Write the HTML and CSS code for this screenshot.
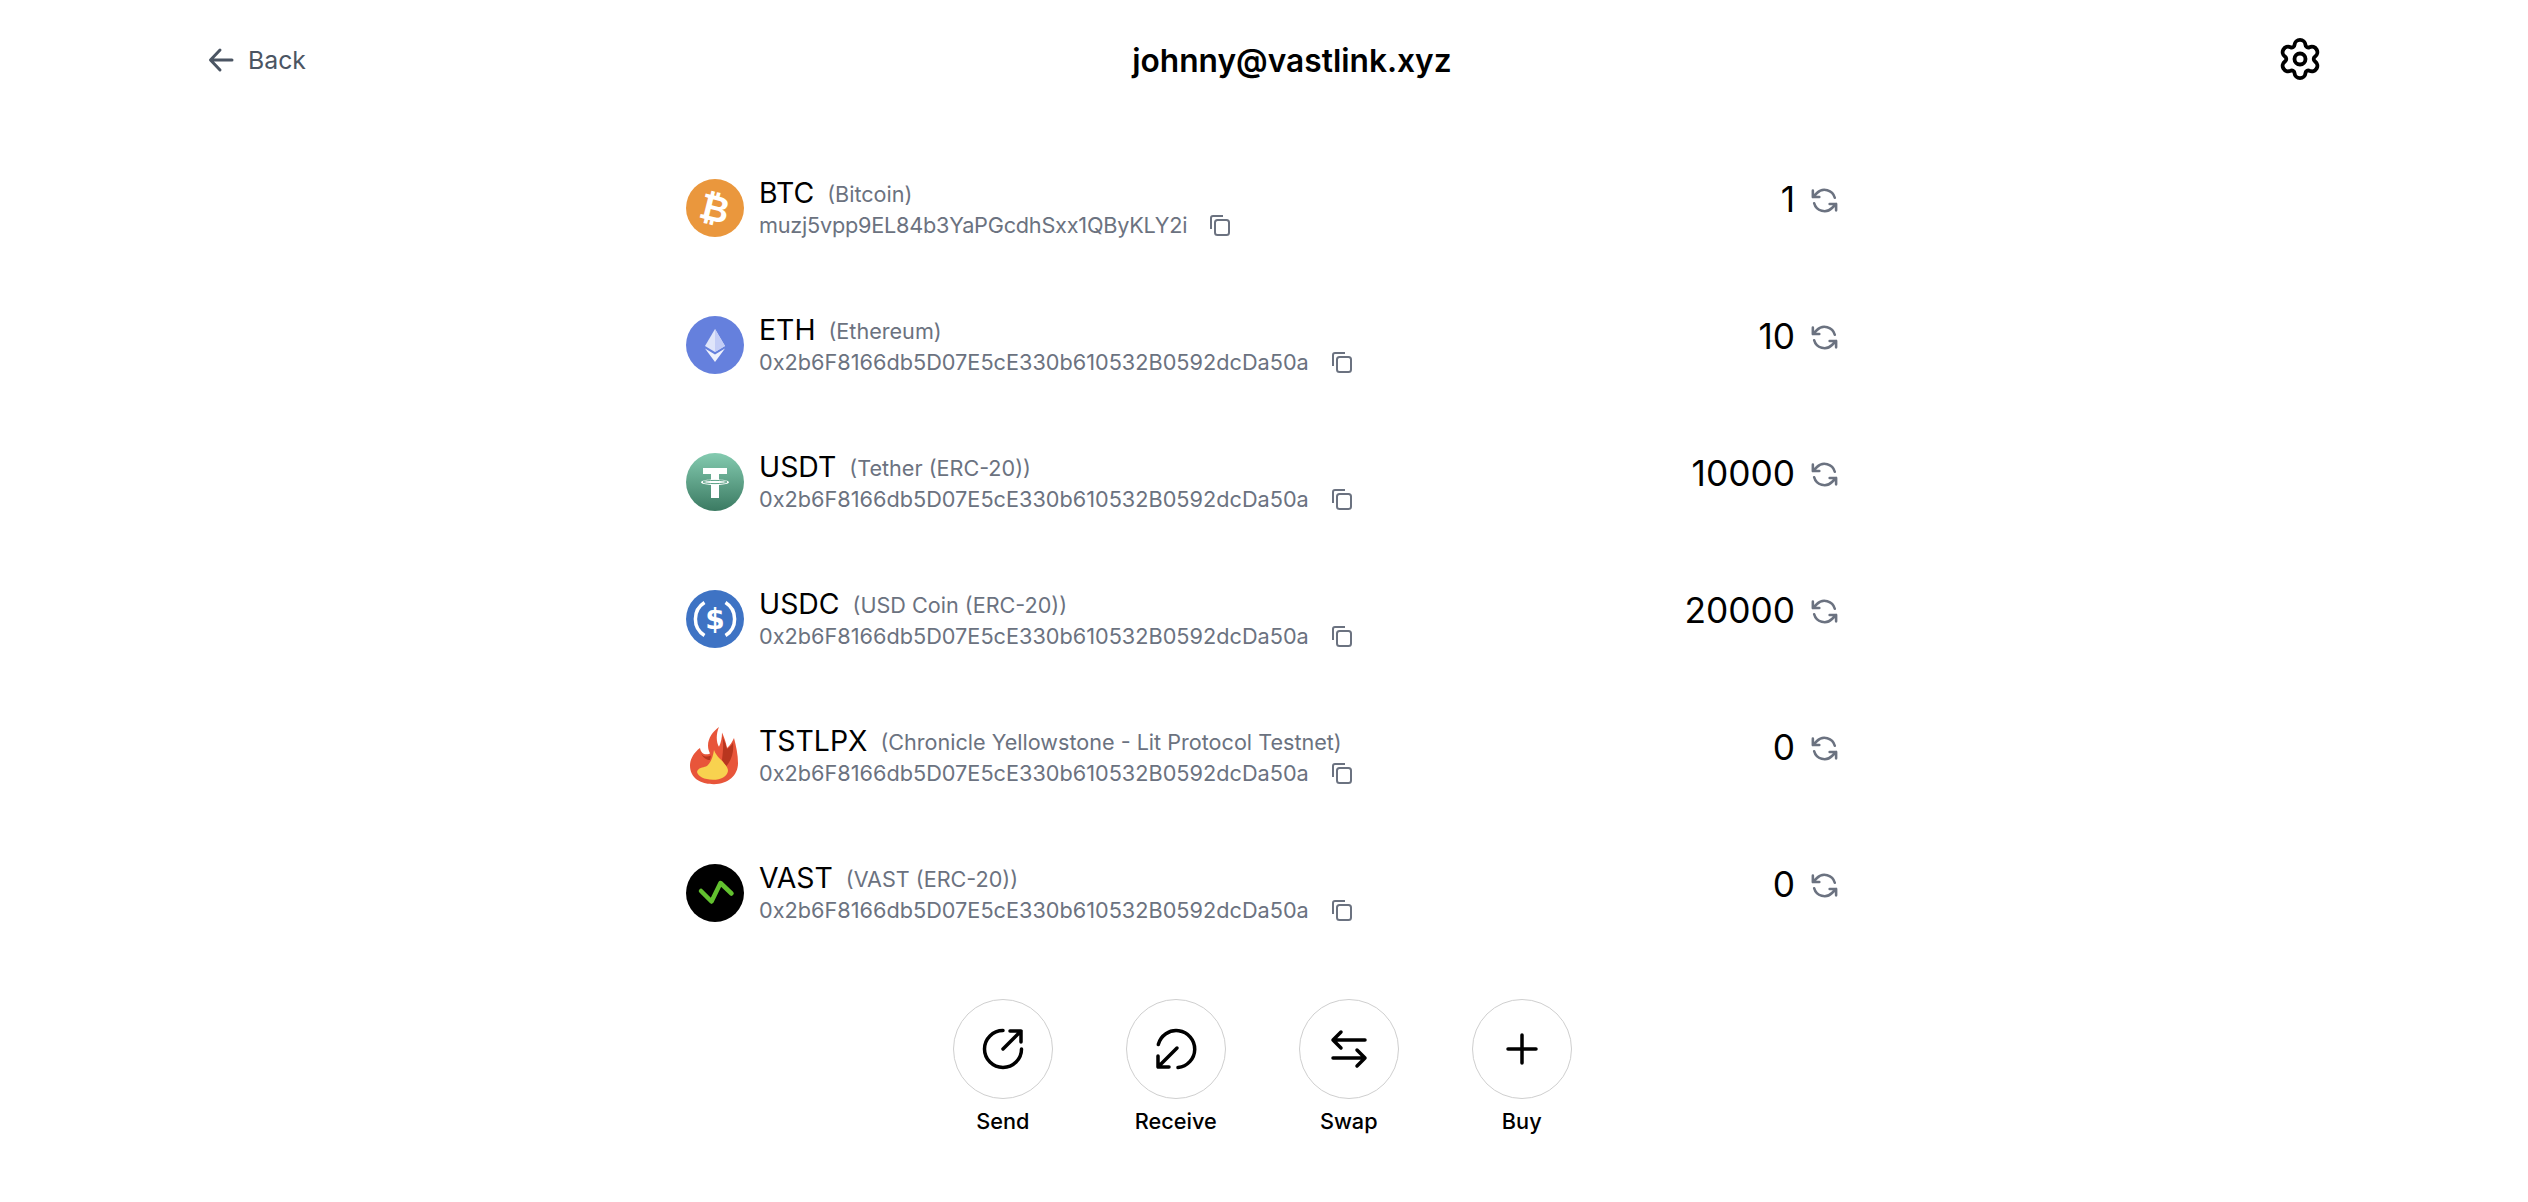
FILE: index.html
```html
<!doctype html>
<html lang="en">
<head>
  <meta charset="UTF-8">
  <title>Wallet</title>
  <link rel="stylesheet" href="styles.css">
</head>
<body>
<div class="page">
  <div class="top">
    <a class="back" href="#">
      <svg class="back-icon" viewBox="0 0 26 26"><path d="M24 13H3M12 3 2.500 13 12 23"/></svg>
      Back
    </a>
    <h1>johnny@vastlink.xyz</h1>
    <svg class="gear" viewBox="0 0 24 24">
      <path d="M9.010 4.310A3 3 0 0 1 14.990 4.310A1.500 1.500 0 0 0 17.165 5.565A3 3 0 0 1 20.155 10.745A1.500 1.500 0 0 0 20.155 13.255A3 3 0 0 1 17.165 18.435A1.500 1.500 0 0 0 14.990 19.690A3 3 0 0 1 9.010 19.690A1.500 1.500 0 0 0 6.835 18.435A3 3 0 0 1 3.845 13.255A1.500 1.500 0 0 0 3.845 10.745A3 3 0 0 1 6.835 5.565A1.500 1.500 0 0 0 9.010 4.310Z"/>
      <circle cx="12" cy="12" r="3"/>
    </svg>
  </div>

  <div class="list">
    <div class="row">
      <svg class="logo" viewBox="0 0 58 58">
        <circle cx="29" cy="29" r="29" fill="#ea973d"/>
        <text class="logo-text" x="29" y="42" transform="rotate(14 29 29)">₿</text>
      </svg>
      <div class="info">
        <div class="name">BTC <span class="full">(Bitcoin)</span></div>
        <div class="addr addr-btc">muzj5vpp9EL84b3YaPGcdhSxx1QByKLY2i
          <svg class="copy" viewBox="0 0 22 22"><rect x="6" y="6" width="14" height="15" rx="2.500"/><path d="M2 15V4a2 2 0 0 1 2-2h10"/></svg>
        </div>
      </div>
      <div class="amount">1</div>
      <svg class="refresh" viewBox="0 0 24 24"><path d="M7.977 9.348H2.985M20.985 19.644v-4.992m0 0h-4.992m4.993 0-3.181 3.183a8.250 8.250 0 0 1-13.803-3.700M19.969 9.865a8.250 8.250 0 0 0-13.803-3.700L2.985 9.347m0-4.991v4.990"/></svg>
    </div>

    <div class="row">
      <svg class="logo" viewBox="0 0 58 58">
        <circle cx="29" cy="29" r="29" fill="#6580dd"/>
        <path d="M29 13 19 30 29 36 39 30Z" fill="#dfe5fa"/>
        <path d="M29 13V36L39 30Z" fill="#c3cdf6"/>
        <path d="M19 32.500 29 46 39 32.500 29 38.500Z" fill="#eef1fc"/>
      </svg>
      <div class="info">
        <div class="name">ETH <span class="full">(Ethereum)</span></div>
        <div class="addr">0x2b6F8166db5D07E5cE330b610532B0592dcDa50a
          <svg class="copy" viewBox="0 0 22 22"><rect x="6" y="6" width="14" height="15" rx="2.500"/><path d="M2 15V4a2 2 0 0 1 2-2h10"/></svg>
        </div>
      </div>
      <div class="amount">10</div>
      <svg class="refresh" viewBox="0 0 24 24"><path d="M7.977 9.348H2.985M20.985 19.644v-4.992m0 0h-4.992m4.993 0-3.181 3.183a8.250 8.250 0 0 1-13.803-3.700M19.969 9.865a8.250 8.250 0 0 0-13.803-3.700L2.985 9.347m0-4.991v4.990"/></svg>
    </div>

    <div class="row">
      <svg class="logo" viewBox="0 0 58 58">
        <defs><linearGradient id="tether" x1="0" y1="0" x2="0" y2="1"><stop offset="0" stop-color="#84cbb0"/><stop offset="1" stop-color="#3b7a62"/></linearGradient></defs>
        <circle cx="29" cy="29" r="29" fill="url(#tether)"/>
        <path d="M17 15H41V21H33V26.500C38 26.800 43 27.800 43 29.200 43 30.600 38 31.600 33 31.900V45H25V31.900C20 31.600 15 30.600 15 29.200 15 27.800 20 26.800 25 26.500V21H17Z" fill="#fff"/>
        <ellipse cx="29" cy="29" rx="12" ry="1.600" fill="none" stroke="#5da287" stroke-width="1"/>
      </svg>
      <div class="info">
        <div class="name">USDT <span class="full">(Tether (ERC-20))</span></div>
        <div class="addr">0x2b6F8166db5D07E5cE330b610532B0592dcDa50a
          <svg class="copy" viewBox="0 0 22 22"><rect x="6" y="6" width="14" height="15" rx="2.500"/><path d="M2 15V4a2 2 0 0 1 2-2h10"/></svg>
        </div>
      </div>
      <div class="amount">10000</div>
      <svg class="refresh" viewBox="0 0 24 24"><path d="M7.977 9.348H2.985M20.985 19.644v-4.992m0 0h-4.992m4.993 0-3.181 3.183a8.250 8.250 0 0 1-13.803-3.700M19.969 9.865a8.250 8.250 0 0 0-13.803-3.700L2.985 9.347m0-4.991v4.990"/></svg>
    </div>

    <div class="row">
      <svg class="logo" viewBox="0 0 58 58">
        <circle cx="29" cy="29" r="29" fill="#3e73c4"/>
        <path d="M18.500 12.500A19.500 19.500 0 0 0 18.500 45.500M39.500 12.500A19.500 19.500 0 0 1 39.500 45.500" fill="none" stroke="#fff" stroke-width="3.500"/>
        <text class="logo-text usdc-text" x="29" y="39">$</text>
      </svg>
      <div class="info">
        <div class="name">USDC <span class="full">(USD Coin (ERC-20))</span></div>
        <div class="addr">0x2b6F8166db5D07E5cE330b610532B0592dcDa50a
          <svg class="copy" viewBox="0 0 22 22"><rect x="6" y="6" width="14" height="15" rx="2.500"/><path d="M2 15V4a2 2 0 0 1 2-2h10"/></svg>
        </div>
      </div>
      <div class="amount">20000</div>
      <svg class="refresh" viewBox="0 0 24 24"><path d="M7.977 9.348H2.985M20.985 19.644v-4.992m0 0h-4.992m4.993 0-3.181 3.183a8.250 8.250 0 0 1-13.803-3.700M19.969 9.865a8.250 8.250 0 0 0-13.803-3.700L2.985 9.347m0-4.991v4.990"/></svg>
    </div>

    <div class="row">
      <svg class="logo" viewBox="0 0 58 58">
        <g transform="scale(1 1.100)">
          <path d="M33 0C27 4 22 10 22 17C22 20 23 22 24 24C19 26 15 24 14 19C8 23 4 29 4 35C4 46 14 52 28 52C42 52 52 44 52 33C52 25 50 17 48 10C46 14 44 17 41 19C40 14 38 9 36 5C36 10 35 14 33 18C30 14 30 6 33 0Z" fill="#e8553a"/>
          <path d="M36 8C38 12 40 16 41 20C44 18 46 16 47 14C48 22 46 30 40 36L36 30C37 22 38 14 36 8Z" fill="#b8361f"/>
          <path d="M14 22C15 26 20 28 25 26L24 30C20 30 16 27 14 22Z" fill="#b8361f"/>
          <path d="M28 21C31 28 36 30 38 33C41 36 42 38 42 40C41 45 35 48 27 48C18 48 12 45 11 41C12 37 17 37 20 36C25 33 27 27 28 21Z" fill="#f8d24f"/>
        </g>
      </svg>
      <div class="info">
        <div class="name">TSTLPX <span class="full">(Chronicle Yellowstone - Lit Protocol Testnet)</span></div>
        <div class="addr">0x2b6F8166db5D07E5cE330b610532B0592dcDa50a
          <svg class="copy" viewBox="0 0 22 22"><rect x="6" y="6" width="14" height="15" rx="2.500"/><path d="M2 15V4a2 2 0 0 1 2-2h10"/></svg>
        </div>
      </div>
      <div class="amount">0</div>
      <svg class="refresh" viewBox="0 0 24 24"><path d="M7.977 9.348H2.985M20.985 19.644v-4.992m0 0h-4.992m4.993 0-3.181 3.183a8.250 8.250 0 0 1-13.803-3.700M19.969 9.865a8.250 8.250 0 0 0-13.803-3.700L2.985 9.347m0-4.991v4.990"/></svg>
    </div>

    <div class="row">
      <svg class="logo" viewBox="0 0 58 58">
        <circle cx="29" cy="29" r="29" fill="#000"/>
        <path d="M15 27 25.500 37.500 34.500 19 45.500 29.500" fill="none" stroke="#62c12f" stroke-width="4.500" stroke-linecap="round" stroke-linejoin="round"/>
      </svg>
      <div class="info">
        <div class="name">VAST <span class="full">(VAST (ERC-20))</span></div>
        <div class="addr">0x2b6F8166db5D07E5cE330b610532B0592dcDa50a
          <svg class="copy" viewBox="0 0 22 22"><rect x="6" y="6" width="14" height="15" rx="2.500"/><path d="M2 15V4a2 2 0 0 1 2-2h10"/></svg>
        </div>
      </div>
      <div class="amount">0</div>
      <svg class="refresh" viewBox="0 0 24 24"><path d="M7.977 9.348H2.985M20.985 19.644v-4.992m0 0h-4.992m4.993 0-3.181 3.183a8.250 8.250 0 0 1-13.803-3.700M19.969 9.865a8.250 8.250 0 0 0-13.803-3.700L2.985 9.347m0-4.991v4.990"/></svg>
    </div>
  </div>

  <div class="actions">
    <div class="action">
      <div class="circle"><svg viewBox="0 0 44 44"><path d="M22 3.500A18.500 18.500 0 1 0 40.500 22M22 22 40 4M29 4H40V15"/></svg></div>
      Send
    </div>
    <div class="action">
      <div class="circle"><svg viewBox="0 0 44 44"><path d="M4.300 17.500A18.500 18.500 0 1 1 24 40.500M23 21 4 40M4 29V40H15"/></svg></div>
      Receive
    </div>
    <div class="action">
      <div class="circle"><svg viewBox="0 0 44 44"><path d="M38 13H6M14 5 6 13 14 21M6 31H38M30 23 38 31 30 39"/></svg></div>
      Swap
    </div>
    <div class="action">
      <div class="circle"><svg viewBox="0 0 44 44"><path d="M22 8V36M8 22H36"/></svg></div>
      Buy
    </div>
  </div>
</div>
</body>
</html>
```

FILE: styles.css
```css
* {
  box-sizing: border-box;
}
body {
  margin: 0;
  background-color: white;
  font-family: Inter, "Liberation Sans", sans-serif;
  color: #000;
}
.top {
  display: flex;
  justify-content: space-between;
  align-items: center;
  height: 118px;
  padding: 0 206px 0 208px;
  margin-bottom: 21px;
}
.back {
  display: flex;
  align-items: center;
  gap: 14px;
  padding-top: 1px;
  font-size: 24.8px;
  color: #4b5563;
  text-decoration: none;
}
.back-icon {
  width: 26px;
  height: 26px;
  fill: none;
  stroke: #4b5563;
  stroke-width: 3;
  stroke-linecap: round;
  stroke-linejoin: round;
}
h1 {
  margin: 0;
  padding-top: 2px;
  font-size: 31.7px;
  font-weight: 600;
}
.gear {
  width: 44px;
  height: 44px;
  fill: none;
  stroke: #000;
  stroke-width: 2.1;
}
.list {
  width: 1156px;
  margin: 0 auto;
}
.row {
  display: flex;
  align-items: center;
  height: 137px;
}
.logo {
  width: 58px;
  height: 58px;
  flex-shrink: 0;
  margin-right: 15px;
}
.logo-text {
  font-family: "DejaVu Sans", sans-serif;
  font-size: 36px;
  font-weight: 700;
  fill: white;
  text-anchor: middle;
}
.usdc-text {
  font-size: 28px;
}
.info {
  flex: 1;
}
.name {
  padding-top: 1px;
  font-size: 28.4px;
  line-height: 32px;
}
.full {
  margin-left: 5px;
  font-size: 21.6px;
  color: #6b7280;
  vertical-align: 1px;
}
.addr {
  display: flex;
  align-items: center;
  gap: 22px;
  font-size: 21.7px;
  line-height: 30px;
  color: #6b7280;
}
.addr-btc {
  letter-spacing: -0.24px;
}
.copy {
  width: 22px;
  height: 22px;
  fill: none;
  stroke: #6b7280;
  stroke-width: 2;
}
.amount {
  align-self: center;
  margin-bottom: 16px;
  font-size: 35.3px;
}
.refresh {
  width: 31px;
  height: 31px;
  margin: 0 2px 15px 14px;
  fill: none;
  stroke: #6b7280;
  stroke-width: 2;
  stroke-linecap: round;
  stroke-linejoin: round;
}
.actions {
  display: flex;
  justify-content: center;
  gap: 73px;
  margin-top: 38px;
  padding-right: 3.5px;
}
.action {
  display: flex;
  flex-direction: column;
  align-items: center;
  width: 100px;
  font-size: 21.7px;
  font-weight: 450;
}
.circle {
  display: flex;
  justify-content: center;
  align-items: center;
  width: 100px;
  height: 100px;
  margin-bottom: 9px;
  border: 1px solid #cfcfcf;
  border-radius: 50%;
}
.circle svg {
  width: 44px;
  height: 44px;
  fill: none;
  stroke: #000;
  stroke-width: 3.500;
  stroke-linecap: round;
  stroke-linejoin: round;
}
```
